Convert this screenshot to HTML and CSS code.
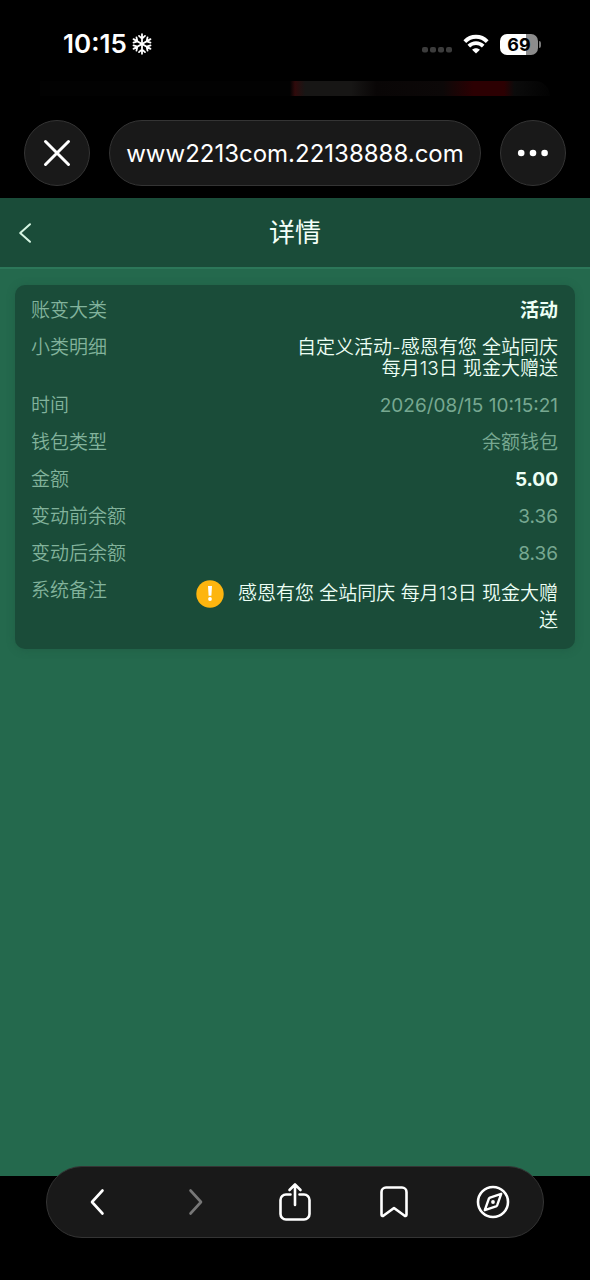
FILE: index.html
```html
<!DOCTYPE html>
<html lang="zh-CN">
<head>
<meta charset="utf-8">
<meta name="viewport" content="width=device-width, initial-scale=1">
<title>详情</title>
<link rel="stylesheet" href="styles.css">
</head>
<body>
<div class="status">
  <div class="status-left">
    <span class="clock">10:15</span>
    <svg class="snow" width="20" height="22" viewBox="0 0 20 22" aria-hidden="true">
      <g fill="none" stroke="#fff" stroke-width="1.8" stroke-linecap="round" stroke-linejoin="round">
        <g id="arm"><path d="M10 11V1.200M7 2.900L10 5.600l3-2.700"/></g>
        <use href="#arm" transform="rotate(60 10 11)"/>
        <use href="#arm" transform="rotate(120 10 11)"/>
        <use href="#arm" transform="rotate(180 10 11)"/>
        <use href="#arm" transform="rotate(240 10 11)"/>
        <use href="#arm" transform="rotate(300 10 11)"/>
      </g>
    </svg>
  </div>
  <div class="status-right">
    <svg class="signal" width="30" height="6" viewBox="0 0 30 6" aria-hidden="true">
      <g fill="#3c3c3c"><rect width="6" height="5.5" rx="2"/><rect x="8" width="6" height="5.5" rx="2"/><rect x="16" width="6" height="5.5" rx="2"/><rect x="24" width="6" height="5.5" rx="2"/></g>
    </svg>
    <svg width="26" height="20" viewBox="0 0 26 20" aria-hidden="true">
      <g fill="none" stroke="#fff" stroke-width="3.8"><path d="M1.800 7.600C8 1.100 18 1.100 24.200 7.600"/><path d="M5.800 12.200c4.200-4 10.200-4 14.400 0"/></g>
      <path d="M13 19.600l-3.900-3.900c2.200-2 5.600-2 7.800 0z" fill="#fff"/>
    </svg>
    <span class="battery"><span class="battery-body">69</span><span class="battery-tip"></span></span>
  </div>
</div>
<div class="peek"></div>
<div class="browser-bar">
  <button class="round" aria-label="关闭">
    <svg width="28" height="28" viewBox="0 0 28 28"><path d="M2.500 2.500l23 23M25.500 2.500l-23 23" stroke="#fff" stroke-width="3" stroke-linecap="round"/></svg>
  </button>
  <button class="address">www2213com.22138888.com</button>
  <button class="round" aria-label="更多">
    <svg width="32" height="8" viewBox="0 0 32 8" fill="#fff"><circle cx="4.200" cy="4" r="3.300"/><circle cx="16" cy="4" r="3.300"/><circle cx="27.600" cy="4" r="3.300"/></svg>
  </button>
</div>
<main class="page">
  <header class="header">
    <button class="back" aria-label="返回">
      <svg width="14" height="22" viewBox="0 0 14 22"><path d="M12 2.200L2.200 11 12 19.800" fill="none" stroke="#d5f5e2" stroke-width="2" stroke-linecap="round" stroke-linejoin="round"/></svg>
    </button>
    <h1 class="title">详情</h1>
  </header>
  <dl class="card">
    <div class="row"><dt>账变大类</dt><dd class="strong">活动</dd></div>
    <div class="row"><dt>小类明细</dt><dd class="bright">自定义活动-感恩有您 全站同庆<br>每月13日 现金大赠送</dd></div>
    <div class="row"><dt>时间</dt><dd>2026/08/15 10:15:21</dd></div>
    <div class="row"><dt>钱包类型</dt><dd>余额钱包</dd></div>
    <div class="row"><dt>金额</dt><dd class="strong">5.00</dd></div>
    <div class="row"><dt>变动前余额</dt><dd>3.36</dd></div>
    <div class="row"><dt>变动后余额</dt><dd>8.36</dd></div>
    <div class="row"><dt>系统备注</dt><dd class="remark">
      <svg class="alert" width="28" height="28" viewBox="0 0 28 28" aria-hidden="true"><circle cx="14" cy="14" r="13.700" fill="#fdb50f"/><path d="M12 6h4l-.6 9.800h-2.800z" fill="#fff"/><circle cx="14" cy="19" r="1.900" fill="#fff"/></svg>
      <span>感恩有您 全站同庆 每月13日 现金大赠送</span>
    </dd></div>
  </dl>
</main>
<footer class="bottom">
  <nav class="toolbar">
    <button aria-label="后退"><svg width="40" height="40" viewBox="0 0 40 40"><path d="M25.500 8.500L15 20l10.500 11.500"/></svg></button>
    <button class="dim" aria-label="前进"><svg width="40" height="40" viewBox="0 0 40 40"><path d="M14.500 8.500L25 20 14.500 31.500"/></svg></button>
    <button aria-label="分享"><svg width="40" height="40" viewBox="0 0 40 40"><path d="M15.500 12.500H11a5.500 5.500 0 0 0-5.500 5.500v14a5.500 5.500 0 0 0 5.500 5.500h18a5.500 5.500 0 0 0 5.500-5.500V18a5.500 5.500 0 0 0-5.500-5.500h-4.500M20 23V2.500M14.500 8L20 2.500 25.500 8"/></svg></button>
    <button aria-label="书签"><svg width="40" height="40" viewBox="0 0 40 40"><path d="M7.500 10a4.500 4.500 0 0 1 4.500-4.500h16a4.500 4.500 0 0 1 4.500 4.500v22.500c0 1.500-1 2-2.200 1L20 26l-10.300 7.500c-1.200 1-2.200.5-2.200-1z"/></svg></button>
    <button aria-label="浏览"><svg width="40" height="40" viewBox="0 0 40 40"><circle cx="20" cy="20" r="15"/><path d="M28.200 11.800L17 15.600Q16.200 16 15.800 16.800L11.800 28.200 23 24.400Q23.800 24 24.200 23.200z" stroke-width="2.400"/><circle cx="20" cy="20" r="1.900" fill="#fff" stroke="none"/></svg></button>
  </nav>
</footer>
</body>
</html>
```
FILE: styles.css
```css
* { box-sizing: border-box; }
body {
  margin: 0;
  min-height: 100vh;
  display: flex;
  flex-direction: column;
  background: #000;
  color: #fff;
  font-family: Inter, "Noto Sans CJK SC", sans-serif;
}
button {
  padding: 0;
  border: 0;
  background: none;
  color: inherit;
  font: inherit;
}
svg { display: block; flex: none; }

.status {
  height: 81px;
  padding: 7px 49px 0 63px;
  display: flex;
  align-items: center;
  justify-content: space-between;
}
.status-left { display: flex; align-items: center; gap: 5px; }
.clock { font-size: 26px; line-height: 30px; font-weight: 600; }
.status-right { display: flex; align-items: center; gap: 11px; }
.signal { margin-top: 12px; }
.battery { display: flex; align-items: center; gap: 1px; }
.battery-body {
  width: 38px;
  height: 21px;
  border-radius: 7px;
  background: linear-gradient(90deg, #fff 69%, #8c8c8c 69%);
  color: #000;
  font-size: 18px;
  line-height: 21px;
  font-weight: 700;
  text-align: center;
}
.battery-tip { width: 2px; height: 7px; border-radius: 0 2px 2px 0; background: #777; }

.peek {
  height: 15px;
  margin: 0 40px;
  border-radius: 0 40px 0 0;
  background: linear-gradient(90deg, #020202 49%, #300a0b 50%, #171615 52%, #171615 61%, #090606 66%, #0c0808 79%, #2c0002 85%, #2c0002 91%, #0b0b0b 93%, #020202);
}

.browser-bar {
  padding: 24px;
  padding-bottom: 12px;
  display: flex;
  gap: 19px;
}
.round, .address {
  height: 66px;
  border: 1px solid #343434;
  border-radius: 33px;
  background: #191919;
}
.round {
  width: 66px;
  flex: none;
  display: flex;
  align-items: center;
  justify-content: center;
}
.address { flex: 1; min-width: 0; font-size: 24px; color: #fff; }

.page { flex: 1; background: #24694d; }
.header {
  height: 71px;
  padding: 1px 18px 0;
  display: grid;
  grid-template-columns: 40px 1fr 40px;
  align-items: center;
  background: #1a4c39;
  border-bottom: 2px solid #2c7759;
}
.back { height: 44px; display: flex; align-items: center; }
.title {
  margin: 0;
  font-size: 26px;
  line-height: 36px;
  font-weight: 400;
  text-align: center;
  color: #f3fff8;
}
.card {
  margin: 16px 15px;
  padding: 15px 17px 15px 16px;
  display: flex;
  flex-direction: column;
  gap: 16px;
  border-radius: 10px;
  background: #1a4c39;
  box-shadow: 0 1px 8px #1a4c3955;
  font-size: 19px;
  line-height: 21px;
  font-weight: 400;
  color: #77a891;
}
.row { display: flex; justify-content: space-between; }
.row dt { flex: none; font-weight: 350; color: #82b39c; }
.row dd { margin: 0; text-align: right; }
.row .bright { font-weight: 350; color: #edfff5; }
.row .strong { color: #edfff5; font-weight: 700; }
.row .remark {
  width: 362px;
  display: flex;
  gap: 12px;
  line-height: 27px;
  font-weight: 350;
  color: #edfff5;
}

.bottom { height: 104px; padding: 0 46px; }
.toolbar {
  position: relative;
  margin-top: -10px;
  height: 72px;
  display: flex;
  justify-content: space-around;
  border: 1px solid #343434;
  border-radius: 36px;
  background: #191919;
}
.toolbar button { flex: 1; display: flex; align-items: center; justify-content: center; }
.toolbar svg {
  fill: none;
  stroke: #fff;
  stroke-width: 2.6;
  stroke-linecap: round;
  stroke-linejoin: round;
}
.toolbar .dim svg { stroke: #777; }
```
